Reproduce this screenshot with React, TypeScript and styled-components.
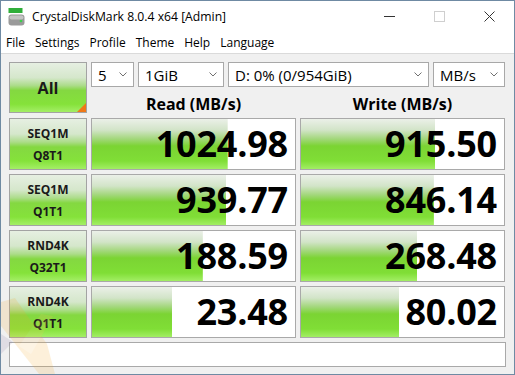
import React from "react";
import styled, { createGlobalStyle } from "styled-components";

// Benchmark results
interface Score {
  name: string;
  param: string;
  read: number;
  write: number;
}

const scores: Score[] = [
  { name: "SEQ1M", param: "Q8T1", read: 1024.98, write: 915.5 },
  { name: "SEQ1M", param: "Q1T1", read: 939.77, write: 846.14 },
  { name: "RND4K", param: "Q32T1", read: 188.59, write: 268.48 },
  { name: "RND4K", param: "Q1T1", read: 23.48, write: 80.02 },
];

// same log meter as the app: log10(score * 10) / log10(1000000)
const meter = (v: number) => Math.min(100, (Math.log10(v * 10) / 6) * 100);

const GlobalStyle = createGlobalStyle`
  html, body {
    margin: 0;
    padding: 0;
    background: #fff;
  }
  body {
    font-family: "Open Sans", "Noto Sans", sans-serif;
  }
`;

const Window = styled.div`
  position: relative;
  width: 515px;
  height: 375px;
  box-sizing: border-box;
  border: 1px solid #6f8aa3;
  background: #f0f0f0;
  display: flex;
  flex-direction: column;
  overflow: hidden;
`;

const TitleBar = styled.div`
  height: 31px;
  background: #fff;
  display: flex;
  align-items: center;
  padding-left: 7px;
`;

const AppIcon = styled.svg`
  width: 17px;
  height: 18px;
  margin-right: 7px;
  flex-shrink: 0;
`;

const Title = styled.div`
  flex: 1;
  font-size: 12.2px;
  color: #000;
  white-space: nowrap;
`;

const Caption = styled.div`
  display: flex;
  height: 100%;
`;

const CaptionButton = styled.div`
  width: 50px;
  height: 100%;
  display: flex;
  align-items: center;
  justify-content: center;
`;

const MenuBar = styled.div`
  height: 21px;
  background: #fff;
  border-bottom: 1px solid #dadada;
  display: flex;
  align-items: center;
  padding-left: 0;
`;

const MenuItem = styled.span`
  font-size: 12px;
  color: #000;
  padding: 0 5px 0 5px;
`;

const Content = styled.div`
  padding: 8px 8px 0 8px;
  display: flex;
  flex-direction: column;
  gap: 5px;
`;

const Top = styled.div`
  display: grid;
  grid-template-columns: 78px 414px;
  column-gap: 4px;
  height: 51px;
`;

const greenFill = `linear-gradient(180deg, #e6efe2 0%, #d5e7cb 30%, #acdc8a 46%, #84d841 56%, #85e23a 84%, #a4ee66 100%)`;

const ModeButton = styled.div<{ $big?: boolean }>`
  position: relative;
  box-sizing: border-box;
  border: 1px solid #a3a3a3;
  background: ${greenFill};
  display: flex;
  flex-direction: column;
  align-items: center;
  justify-content: center;
  color: #1a1a1a;
  font-weight: 700;
  font-size: ${(p) => (p.$big ? "16px" : "12px")};
  line-height: 22px;
  padding-top: 1px;

  &::after {
    content: "";
    display: ${(p) => (p.$big ? "block" : "none")};
    position: absolute;
    right: 0;
    bottom: 0;
    border-style: solid;
    border-width: 0 0 9px 9px;
    border-color: transparent transparent #f07818 transparent;
  }
`;

const Controls = styled.div`
  display: flex;
  flex-direction: column;
`;

const SelectRow = styled.div`
  display: flex;
  gap: 4px;
  height: 25px;
`;

const Select = styled.div<{ $w: number }>`
  width: ${(p) => p.$w}px;
  box-sizing: border-box;
  border: 1px solid #a8a8a8;
  background: #fff;
  display: flex;
  align-items: center;
  padding: 0 6px 0 6px;
  font-size: 15px;
  color: #000;
  white-space: nowrap;

  span {
    flex: 1;
  }
`;

const Chevron = () => (
  <svg width="8" height="5" viewBox="0 0 8 5">
    <polyline points="0.5,0.5 4,4 7.5,0.5" fill="none" stroke="#707070" strokeWidth="1" />
  </svg>
);

const Headers = styled.div`
  display: grid;
  grid-template-columns: 205px 205px;
  column-gap: 4px;
  height: 26px;
`;

const Header = styled.div`
  text-align: center;
  font-size: 16px;
  font-weight: 700;
  color: #000;
  line-height: 34px;
  height: 26px;
`;

const Row = styled.div`
  display: grid;
  grid-template-columns: 78px 205px 205px;
  column-gap: 4px;
  height: 51px;
`;

const ResultCell = styled.div`
  box-sizing: border-box;
  border: 1px solid #a9a9a9;
  background-color: #fff;
  background-image: linear-gradient(180deg, #ebf0e8 0%, #d2e4c8 22%, #a2d77a 40%, #7bd433 54%, #80de36 84%, #a2ee64 100%);
  background-repeat: no-repeat;
  text-align: right;
  padding-right: 7px;
  font-size: 36px;
  font-weight: 700;
  color: #000;
  line-height: 50px;
  letter-spacing: -0.2px;
`;

const StatusBar = styled.div`
  height: 25px;
  box-sizing: border-box;
  border: 1px solid #a9a9a9;
  background: #fff;
`;

const Watermark = styled.svg`
  position: absolute;
  left: 0;
  bottom: 0;
  width: 60px;
  height: 90px;
  pointer-events: none;
  opacity: 0.16;
`;

const App: React.FC = () => {
  return (
    <>
      <GlobalStyle />
      <Window>
        <TitleBar>
          <AppIcon viewBox="0 0 17 18">
            <rect x="0.5" y="0" width="14" height="5" fill="#2fae3a" />
            <rect x="0.5" y="6.5" width="16" height="11" rx="3" fill="#9a9a9a" />
            <rect x="1.5" y="7.5" width="14" height="4" rx="2" fill="#c4c4c4" />
            <circle cx="13" cy="13" r="1.3" fill="#3bd14a" />
          </AppIcon>
          <Title>CrystalDiskMark 8.0.4 x64 [Admin]</Title>
          <Caption>
            <CaptionButton>
              <svg width="11" height="1"><rect width="11" height="1" fill="#333" /></svg>
            </CaptionButton>
            <CaptionButton>
              <svg width="11" height="11"><rect x="0.5" y="0.5" width="10" height="10" fill="none" stroke="#cfcfcf" /></svg>
            </CaptionButton>
            <CaptionButton>
              <svg width="11" height="11">
                <line x1="0.5" y1="0.5" x2="10.5" y2="10.5" stroke="#333" />
                <line x1="10.5" y1="0.5" x2="0.5" y2="10.5" stroke="#333" />
              </svg>
            </CaptionButton>
          </Caption>
        </TitleBar>
        <MenuBar>
          {["File", "Settings", "Profile", "Theme", "Help", "Language"].map((m) => (
            <MenuItem key={m}>{m}</MenuItem>
          ))}
        </MenuBar>
        <Content>
          <Top>
            <ModeButton $big>All</ModeButton>
            <Controls>
              <SelectRow>
                <Select $w={43}><span>5</span><Chevron /></Select>
                <Select $w={86}><span>1GiB</span><Chevron /></Select>
                <Select $w={201}><span>D: 0% (0/954GiB)</span><Chevron /></Select>
                <Select $w={72}><span>MB/s</span><Chevron /></Select>
              </SelectRow>
              <Headers>
                <Header>Read (MB/s)</Header>
                <Header>Write (MB/s)</Header>
              </Headers>
            </Controls>
          </Top>
          {scores.map((s, i) => (
            <Row key={i}>
              <ModeButton>
                <div>{s.name}</div>
                <div>{s.param}</div>
              </ModeButton>
              <ResultCell style={{ backgroundSize: `${meter(s.read)}% 100%` }}>
                {s.read.toFixed(2)}
              </ResultCell>
              <ResultCell style={{ backgroundSize: `${meter(s.write)}% 100%` }}>
                {s.write.toFixed(2)}
              </ResultCell>
            </Row>
          ))}
          <StatusBar />
        </Content>
        <Watermark viewBox="0 0 60 90">
          <polygon points="0,18 14,14 46,60 54,90 38,90 0,42" fill="#f5a623" />
          <polygon points="18,62 40,30 52,32 30,70" fill="#f8c060" />
          <polygon points="0,50 12,58 0,70" fill="#8a7aa8" />
        </Watermark>
      </Window>
    </>
  );
};

export default App;
